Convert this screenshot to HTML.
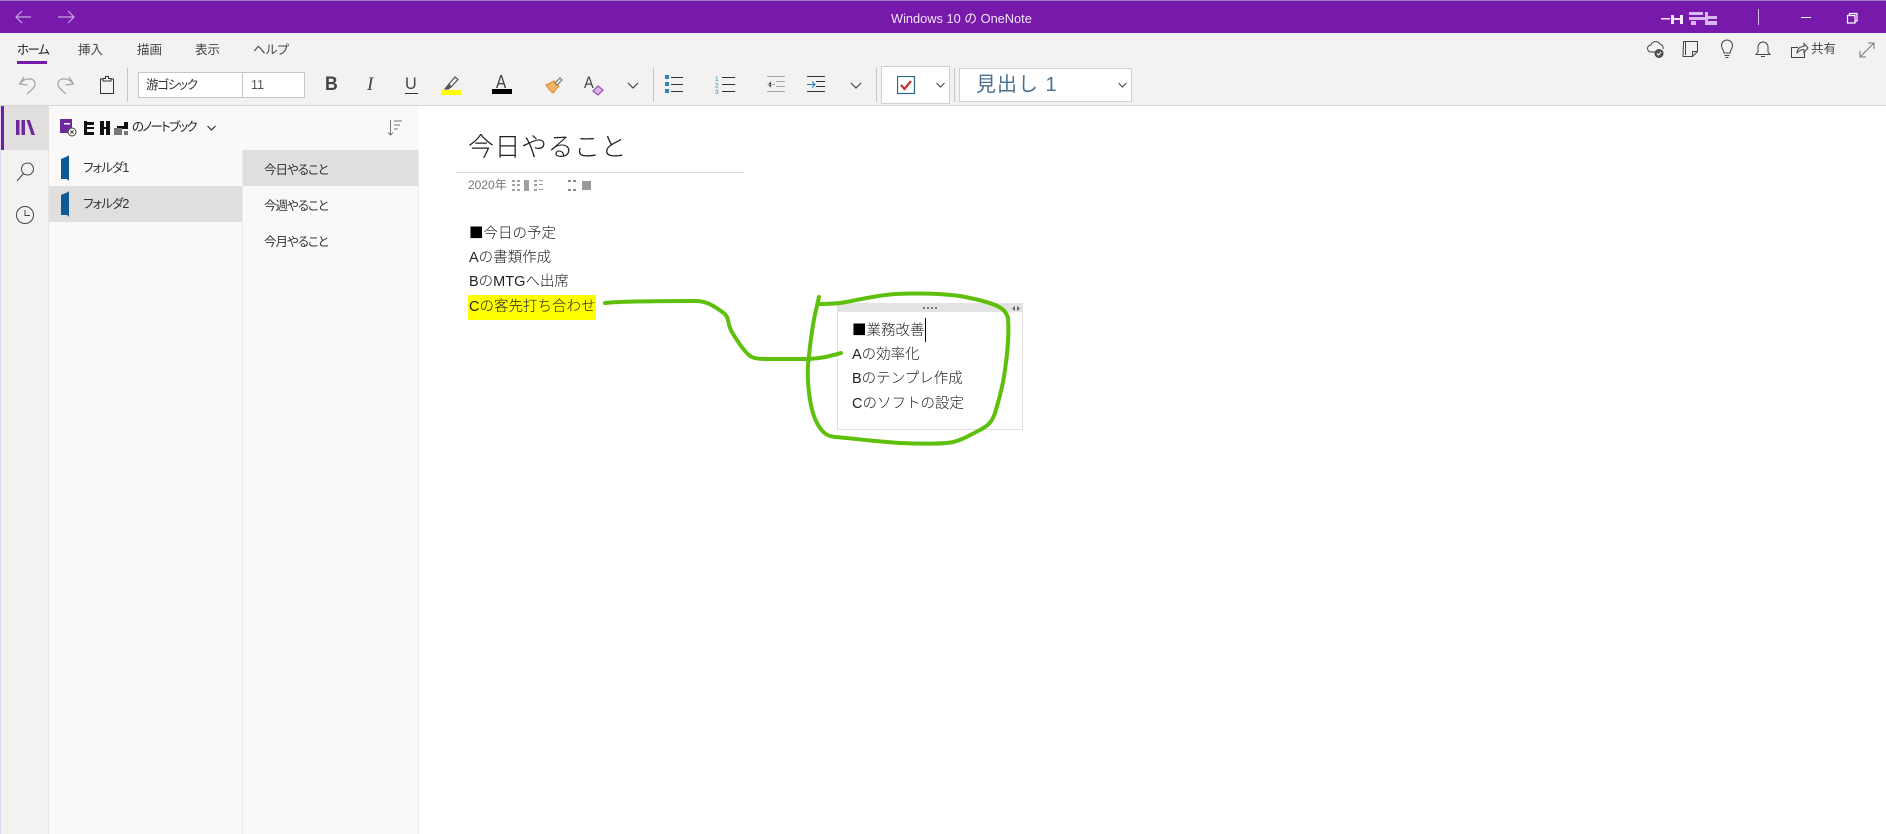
<!DOCTYPE html>
<html lang="ja"><head><meta charset="utf-8"><title>OneNote</title>
<style>
*{box-sizing:border-box}
html,body{margin:0;padding:0;width:1886px;height:834px;overflow:hidden;background:#fff;font-family:"Liberation Sans","Noto Sans CJK JP",sans-serif;color:#252423}
.a{position:absolute;white-space:nowrap}
svg.i{position:absolute;overflow:visible;fill:none;stroke:#444;stroke-width:1.2}
.t{font-size:12.5px;color:#444;top:41px;line-height:18px;font-feature-settings:"palt"}
.b{font-size:14.5px;line-height:20px;color:#222;left:469px;font-weight:300}
.b span{font-family:"Noto Sans CJK JP",sans-serif;color:#000}
.s{font-size:12.5px;line-height:18px;color:#333;font-feature-settings:"palt";letter-spacing:-1px}
</style></head><body>
<div class="a" style="left:0;top:0;width:1886px;height:33px;background:#7719aa;border-top:1px solid #a47cc4"></div>
<svg class="i" style="left:0;top:0;stroke:#c9a5e3" width="90" height="33"><path d="M31 17H16M22 11l-6 6 6 6M58 17h16M68 11l6 6-6 6"/></svg>
<div class="a" style="left:891px;top:10px;font-size:12.800px;line-height:18px;color:#f1e6f7">Windows 10 の OneNote</div>
<svg class="a" style="left:1661px;top:12px" width="58" height="14"><g fill="#f3e8fa"><rect x="0" y="6" width="9" height="1.500"/><rect x="10" y="3" width="3" height="9"/><rect x="10" y="6" width="11" height="2"/><rect x="19" y="3" width="3" height="9"/></g><g fill="#d9b7f0"><rect x="28" y="0" width="14" height="3"/><rect x="28" y="5" width="18" height="3"/><rect x="30" y="9" width="5" height="4"/><rect x="44" y="0" width="3" height="13"/><rect x="47" y="4" width="9" height="3"/><rect x="47" y="9" width="9" height="4"/></g></svg>
<div class="a" style="left:1758px;top:9px;width:1px;height:16px;background:#d6bfe5"></div>
<div class="a" style="left:1801px;top:17px;width:10px;height:1px;background:#fff"></div>
<svg class="i" style="left:1847px;top:13px;stroke:#fff" width="11" height="11"><path d="M.5 2.500h7.500v7.500h-7.500zM2.500 2.500V.5h7.500v7.500H8"/></svg>

<div class="a" style="left:0;top:33px;width:1886px;height:73px;background:#f3f2f1;border-bottom:1px solid #d8d6d4"></div>
<div class="a t" style="left:17px;color:#222;letter-spacing:-1.500px">ホーム</div><div class="a" style="left:17px;top:61px;width:30px;height:3px;background:#7719aa"></div>
<div class="a t" style="left:78px">挿入</div><div class="a t" style="left:137px">描画</div><div class="a t" style="left:195px">表示</div><div class="a t" style="left:253px">ヘルプ</div>

<!-- toolbar -->
<svg class="i" style="left:0;top:0;stroke:#a5a3a1" width="80" height="100"><path d="M24 77L19.500 84l8 1M19.500 84C24 77 36 77 35 85C34.500 88 30 91 27 94"/><path d="M69 77L73.500 84l-8 1M73.500 84C69 77 57 77 58 85C58.500 88 63 91 66 94"/></svg>
<svg class="i" style="left:0;top:0;stroke:#333;stroke-width:1" width="120" height="100"><path d="M103 79H100.500V93.500H113.500V79H111M103 81V78.500H105.500V76.500H108.500V78.500H111V81z"/></svg>
<div class="a" style="left:127px;top:68px;width:1px;height:34px;background:#c8c6c4"></div>
<div class="a" style="left:138px;top:72px;width:167px;height:26px;background:#fff;border:1px solid #c8c6c4"></div>
<div class="a" style="left:242px;top:72px;width:1px;height:26px;background:#c8c6c4"></div>
<div class="a" style="left:146px;top:76px;font-size:12.500px;line-height:18px;color:#333;font-feature-settings:'palt';letter-spacing:-1.200px">游ゴシック</div>
<div class="a" style="left:251px;top:76px;font-size:12.500px;line-height:18px;color:#555">11</div>
<div class="a" style="left:325px;top:74px;font:bold 19px/22px 'Liberation Sans';color:#444;transform:scaleX(.93);transform-origin:0 0">B</div>
<div class="a" style="left:367px;top:74px;font:italic 19px/22px 'Liberation Serif';color:#444">I</div>
<div class="a" style="left:405px;top:74px;font:17px/20px 'Liberation Sans';color:#444;transform:scaleX(.95);transform-origin:0 0">U</div><div class="a" style="left:405px;top:93px;width:13px;height:1px;background:#333"></div>
<svg class="i" style="left:441px;top:74px;stroke:#555" width="21" height="16"><path d="M8 10L14 3l3 2.500-7 7.500"/><path d="M4 15l4-5 2 3-3 2z" fill="#555"/></svg>
<div class="a" style="left:441px;top:90px;width:20px;height:5px;background:#ff0"></div>
<div class="a" style="left:496px;top:73px;font:18px/19px 'Liberation Sans';color:#444;transform:scaleX(.85);transform-origin:0 0">A</div><div class="a" style="left:492px;top:89px;width:20px;height:5px;background:#000"></div>
<svg class="a" style="left:545px;top:76px" width="18" height="18"><path d="M1 9l8-4 5 5-6 7c-2-1-5-5-7-8z" fill="#f2b563" stroke="#e08a2c"/><path d="M10 7l5-5 2 2-5 5z" fill="#fff" stroke="#666"/></svg>
<div class="a" style="left:584px;top:73px;font:17px/19px 'Liberation Sans';color:#444;transform:scaleX(.85);transform-origin:0 0">A</div>
<svg class="a" style="left:592px;top:84px" width="13" height="12"><path d="M1 7l5-5 5 4-5 5z" fill="#d9b6e6" stroke="#9a55b5" stroke-width="1.300"/></svg>
<svg class="i" style="left:627px;top:82px;stroke:#444" width="235" height="8"><path d="M1 1l5 5 5-5M224 1l5 5 5-5"/></svg>
<div class="a" style="left:653px;top:68px;width:1px;height:34px;background:#c8c6c4"></div>
<svg class="a" style="left:665px;top:75px" width="162" height="19"><g fill="#2a86b5"><rect x="0" y="0" width="4" height="4"/><rect x="0" y="7" width="4" height="4"/><rect x="0" y="14" width="4" height="4"/></g><g stroke="#333"><path d="M6 2.500h12M6 9.500h12M6 16.500h12M57 2.500h13M57 9.500h13M57 16.500h13M142 1.500h18M151 6.500h9M151 11.500h9M142 16.500h18"/></g><g stroke="#a9a7a5"><path d="M102 1.500h18M111 6.500h9M111 11.500h9M102 16.500h18M110 9.500h-7m3-3l-3 3 3 3"/></g><path d="M142 9.500h8m-3-3l3 3-3 3" stroke="#1f7fb5" fill="none"/><text x="50" y="6" font-size="6.500" fill="#2a86b5" font-family="Liberation Sans">1</text><text x="50" y="12.500" font-size="6.500" fill="#2a86b5" font-family="Liberation Sans">2</text><text x="50" y="19" font-size="6.500" fill="#2a86b5" font-family="Liberation Sans">3</text></svg>
<div class="a" style="left:876px;top:68px;width:1px;height:34px;background:#c8c6c4"></div>
<div class="a" style="left:881px;top:66px;width:69px;height:38px;background:#fff;border:1px solid #d2d0ce"></div>
<svg class="a" style="left:897px;top:76px" width="19" height="19"><rect x=".5" y=".5" width="17" height="17" fill="#fff" stroke="#2b6a83" stroke-width="1.200"/><path d="M4 9l3.500 4L14 5" fill="none" stroke="#c8352d" stroke-width="2.200"/></svg>
<svg class="i" style="left:936px;top:82px;stroke:#555" width="9" height="6"><path d="M.5 1l4 4 4-4"/></svg>
<div class="a" style="left:954px;top:68px;width:1px;height:34px;background:#c8c6c4"></div>
<div class="a" style="left:959px;top:68px;width:173px;height:34px;background:#fff;border:1px solid #d2d0ce"></div>
<div class="a" style="left:976px;top:70px;font-size:20px;line-height:30px;letter-spacing:1px;color:#4a7190">見出し 1</div>
<svg class="i" style="left:1118px;top:82px;stroke:#555" width="9" height="6"><path d="M.5 1l4 4 4-4"/></svg>

<!-- right icons -->
<svg class="i" style="left:1647px;top:41px;stroke:#444;stroke-width:1" width="230" height="18">
<path d="M4 11a3.500 3.500 0 0 1 0-7 5 5 0 0 1 9-1 4 4 0 0 1 3 5M4 11h5"/><circle cx="12" cy="12.500" r="4" fill="#555"/><path d="M10 12.500l1.500 1.500 2.500-3" stroke="#fff"/>
<path d="M36.500 .5h14v10l-5 5h-9.500zM50.500 10.500h-5v5M38.500 .5v13.500"/>
<path d="M77 12c0-3-2.500-4-2.500-7.500a5.500 5.500 0 0 1 11 0c0 3.500-2.500 4.500-2.500 7.500zM77.500 14.500h5M78.500 16.500h3"/>
<path d="M109 13.500h14l-2-2.500V6a5 5 0 0 0-10 0v5zM114 15.500h4"/>
<path d="M151 6.500h-6.500v10h13v-5M150 12c0-4 3-6.500 7-6.500V2.500l4 4.500-4 4.500V8.500c-3 0-5 1-7 3.500z"/>
<path d="M213 16l14-14M213 10v6h6M221 2h6v6" stroke="#777"/></svg>
<div class="a" style="left:1811px;top:40px;font-size:12.500px;line-height:18px;color:#444">共有</div>

<!-- left rail -->
<div class="a" style="left:0;top:106px;width:49px;height:728px;background:#f3f2f1;border-right:1px solid #e6e4e2"></div>
<div class="a" style="left:0;top:106px;width:1px;height:728px;background:#d9dcec"></div>
<div class="a" style="left:1px;top:106px;width:48px;height:44px;background:#e1dfdd"></div>
<div class="a" style="left:1px;top:106px;width:3px;height:44px;background:#7719aa"></div>
<svg class="a" style="left:16px;top:120px" width="20" height="16"><g fill="#6d2a9f"><rect x="0" y="0" width="3.500" height="15"/><rect x="5.500" y="0" width="3.500" height="15"/><path d="M10.500 0h3.300l5.200 15h-3.500z"/></g></svg>
<svg class="i" style="left:16px;top:162px;stroke:#444;stroke-width:1" width="20" height="20"><circle cx="11.500" cy="7" r="6"/><path d="M7.500 11.500L1 19"/></svg>
<svg class="i" style="left:16px;top:206px;stroke:#444;stroke-width:1" width="20" height="20"><circle cx="9" cy="9" r="8.500"/><path d="M9 4v5.500h5"/></svg>

<!-- nav panels -->
<div class="a" style="left:49px;top:106px;width:370px;height:44px;background:#faf9f8"></div>
<div class="a" style="left:49px;top:150px;width:194px;height:684px;background:#faf9f8;border-right:1px solid #edebe9"></div>
<div class="a" style="left:243px;top:150px;width:176px;height:684px;background:#faf9f8;border-right:1px solid #edebe9"></div>
<div class="a" style="left:49px;top:186px;width:193px;height:36px;background:#e1dfdd"></div>
<div class="a" style="left:243px;top:150px;width:175px;height:36px;background:#e1dfdd"></div>
<svg class="a" style="left:60px;top:119px" width="17" height="18"><path d="M0 0h12v14H0z" fill="#6d2a9f"/><rect x="4" y="4" width="6" height="1.500" fill="#fff"/><circle cx="12" cy="13" r="4" fill="#faf9f8" stroke="#444"/><path d="M10.500 11.500l3 3m0-3l-3 3" stroke="#444"/></svg>
<svg class="a" style="left:84px;top:121px" width="46" height="15"><g fill="#111"><rect x="0" y="0" width="3" height="14"/><rect x="3" y="1" width="7" height="3"/><rect x="3" y="6" width="7" height="2"/><rect x="3" y="11" width="7" height="3"/><rect x="16" y="0" width="4" height="14"/><rect x="22" y="0" width="4" height="14"/><rect x="20" y="6" width="2" height="2"/><rect x="40" y="1" width="4" height="4"/><rect x="33" y="5" width="11" height="3"/></g><g fill="#777"><rect x="30" y="7" width="8" height="7"/><rect x="40" y="10" width="4" height="4"/></g></svg>
<div class="a" style="left:132px;top:118px;font-size:12.500px;line-height:18px;color:#222;font-feature-settings:'palt';letter-spacing:-1.700px">のノートブック</div>
<svg class="i" style="left:207px;top:125px;stroke:#333" width="9" height="6"><path d="M.5 1l4 4 4-4"/></svg>
<svg class="i" style="left:387px;top:120px;stroke:#777;stroke-width:1" width="16" height="16"><path d="M3.500 0v15M1 12.500l2.500 2.500 2.500-2.500M7 1h8M7 5h6M7 9h4"/></svg>
<svg class="a" style="left:61px;top:155px" width="9" height="62"><path d="M8 0v26l-2-2H0c0-6-.5-15 0-20 2-1 6-2 8-4z" fill="#0d5a96"/><path d="M8 36v26l-2-2H0c0-6-.5-15 0-20 2-1 6-2 8-4z" fill="#0d5a96"/></svg>
<div class="a s" style="left:83px;top:159px">フォルダ1</div>
<div class="a s" style="left:83px;top:195px">フォルダ2</div>
<div class="a s" style="left:264px;top:161px">今日やること</div>
<div class="a s" style="left:264px;top:197px">今週やること</div>
<div class="a s" style="left:264px;top:233px">今月やること</div>

<!-- page -->
<div class="a" style="left:468px;top:129px;font-size:26px;line-height:36px;color:#222;letter-spacing:.5px;font-weight:300">今日やること</div>
<div class="a" style="left:456px;top:172px;width:288px;height:1px;background:#e1dfdd"></div>
<div class="a" style="left:468px;top:176px;font-size:12px;line-height:18px;color:#777">2020年</div>
<svg class="a" style="left:510px;top:179px" width="82" height="13"><g fill="#8a8a8a"><path d="M2 1h3v2H2zM7 1h3v2H7zM2 5h3v2H2zM7 5h3v2H7zM2 10h3v2H2zM7 10h3v2H7zM14 1h5v11h-5zM24 1h3v2h-3zM29 1h4v1h-4zM24 5h3v2h-3zM29 5h4v1h-4zM24 10h3v2h-3zM29 10h4v1h-4z" opacity=".8"/><path d="M58 1h3v2h-3zM63 1h3v2h-3zM58 10h3v2h-3zM63 10h3v2h-3z"/><rect x="72" y="2" width="9" height="9" fill="#999"/></g></svg>
<div class="a" style="left:468px;top:295px;width:128px;height:25px;background:#ff0"></div>
<div class="a b" style="top:223px"><span>■</span>今日の予定</div>
<div class="a b" style="top:248px">Aの書類作成</div>
<div class="a b" style="top:272px">BのMTGへ出席</div>
<div class="a b" style="top:297px">Cの客先打ち合わせ</div>

<div class="a" style="left:837px;top:303px;width:186px;height:127px;background:#fff;border:1px solid #e1dfdd;border-top:0"></div>
<div class="a" style="left:837px;top:303px;width:186px;height:9px;background:#e3e3e3"></div>
<svg class="a" style="left:923px;top:306px" width="98" height="5"><g fill="#777"><rect x="0" y="1" width="2" height="2"/><rect x="4" y="1" width="2" height="2"/><rect x="8" y="1" width="2" height="2"/><rect x="12" y="1" width="2" height="2"/></g><path d="M92 0v5l-3-2.500zM94 0v5l3-2.500z" fill="#666"/></svg>
<div class="a b" style="left:852px;top:320px"><span>■</span>業務改善</div>
<div class="a" style="left:925px;top:318px;width:1px;height:24px;background:#000"></div>
<div class="a b" style="left:852px;top:345px">Aの効率化</div>
<div class="a b" style="left:852px;top:369px">Bのテンプレ作成</div>
<div class="a b" style="left:852px;top:394px">Cのソフトの設定</div>

<svg class="a" style="left:0;top:0;pointer-events:none" width="1886" height="834" fill="none" stroke="#5fc00c" stroke-width="4" stroke-linecap="round" stroke-linejoin="round">
<path d="M605 303C625 301 670 301 695 301C706 301 712 305 718 309C724 313 727 315 728 320C729 327 731 331 735 337C740 345 745 352 750 356C753 358 757 359 765 359L805 359C820 359 830 356 841 353"/>
<path d="M819 297L816 310C813 322 810 345 808 365C807 385 810 410 817 423C822 432 826 436 835 437C850 438 870 441 900 443C920 444 945 444 953 442C962 440 968 436 978 431C988 426 992 422 995 413C999 400 1003 385 1005 370C1008 350 1009 330 1008 318C1006 311 1002 308 995 305C985 301 975 299 960 296C945 294 920 293 895 294C870 296 855 301 840 303C830 304 825 304 818 304"/>
</svg>
</body></html>
